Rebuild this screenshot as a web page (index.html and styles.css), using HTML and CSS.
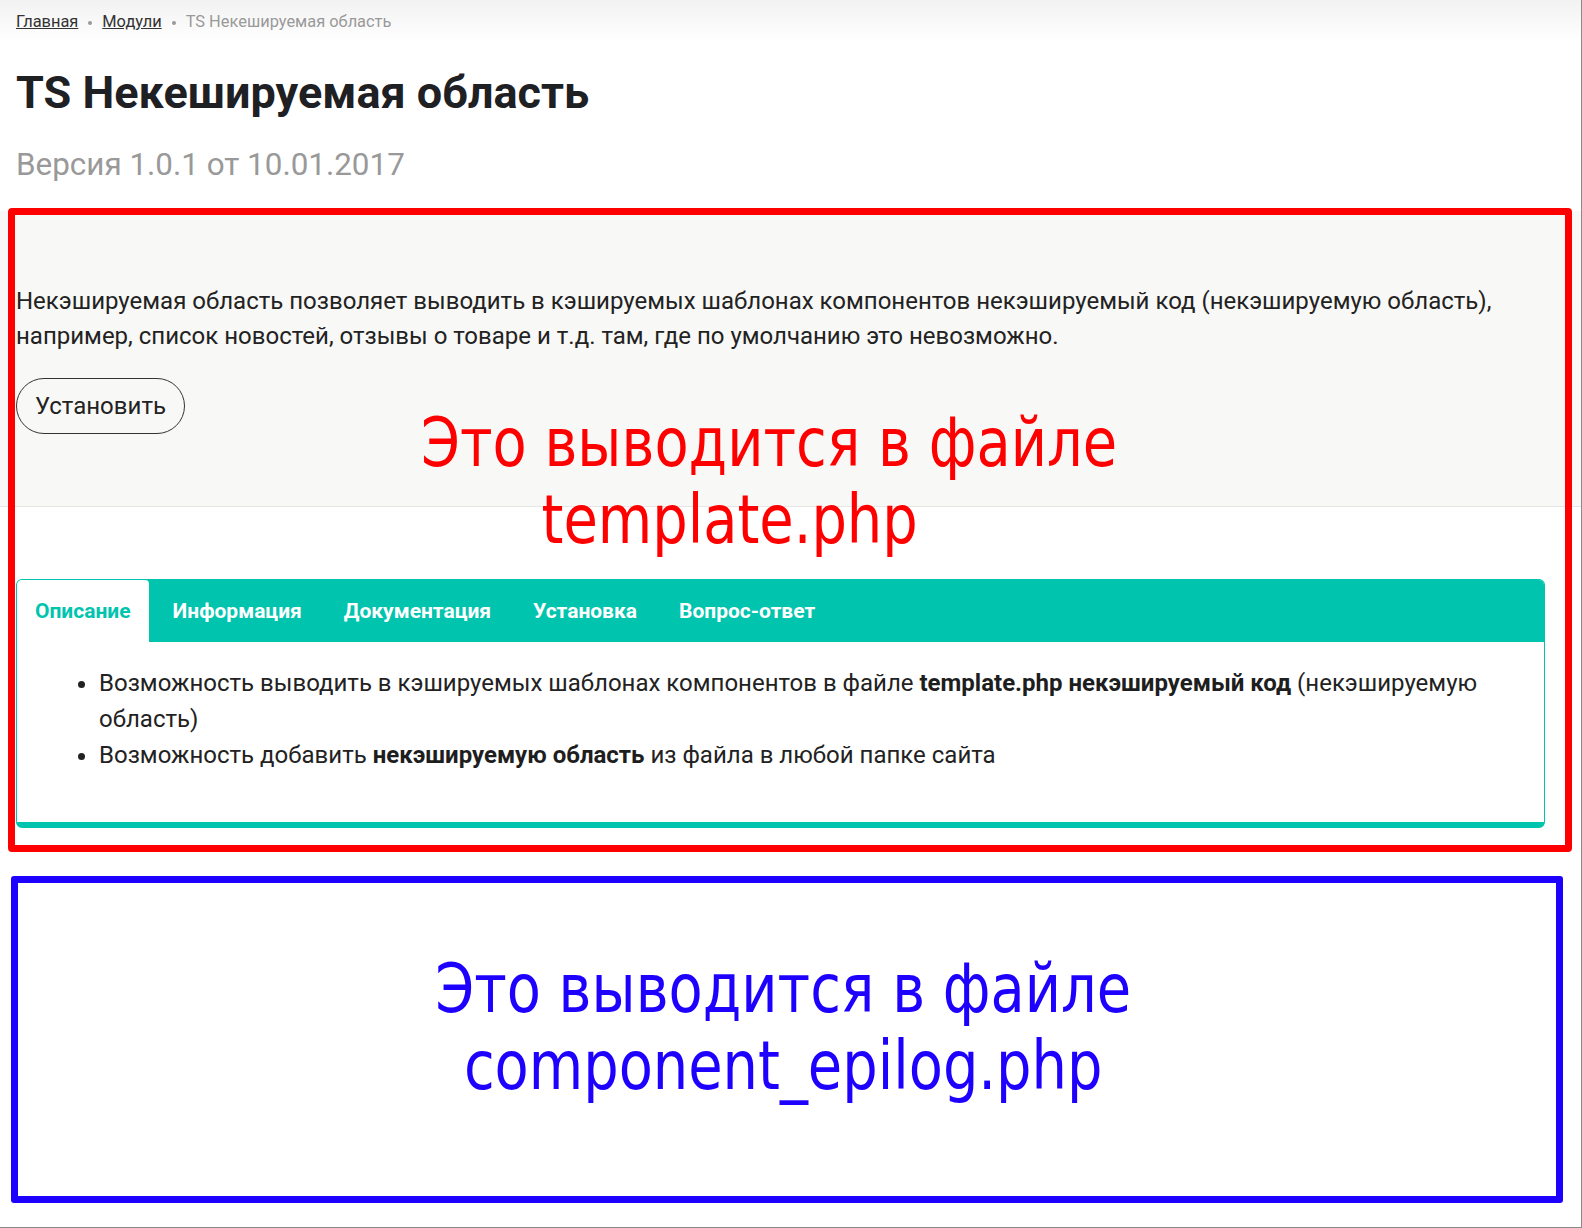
FILE: index.html
```html
<!DOCTYPE html>
<html lang="ru">
<head>
<meta charset="utf-8">
<title>TS Некешируемая область</title>
<link rel="stylesheet" href="styles.css">
</head>
<body>
<div class="page">
  <div class="topband">
    <nav class="crumbs">
      <a href="#" class="crumb-link">Главная</a>
      <span class="crumb-sep"></span>
      <a href="#" class="crumb-link">Модули</a>
      <span class="crumb-sep"></span>
      <span class="crumb-current">TS Некешируемая область</span>
    </nav>
  </div>
  <h1 class="title">TS Некешируемая область</h1>
  <div class="version">Версия 1.0.1 от 10.01.2017</div>

  <div class="cached">
    <section class="intro">
      <p class="intro-text">Некэшируемая область позволяет выводить в кэшируемых шаблонах компонентов некэшируемый код (некэшируемую область), например, список новостей, отзывы о товаре и т.д. там, где по умолчанию это невозможно.</p>
      <button class="install-btn">Установить</button>
    </section>
    <div class="tabs-wrap">
      <div class="tabs">
        <div class="tab-bar">
          <span class="tab tab-active">Описание</span>
          <span class="tab">Информация</span>
          <span class="tab">Документация</span>
          <span class="tab">Установка</span>
          <span class="tab">Вопрос-ответ</span>
        </div>
        <div class="tab-body">
          <ul class="features">
            <li>Возможность выводить в кэшируемых шаблонах компонентов в файле <b>template.php некэшируемый код</b> (некэшируемую область)</li>
            <li>Возможность добавить <b>некэшируемую область</b> из файла в любой папке сайта</li>
          </ul>
        </div>
      </div>
    </div>
    <div class="frame-red"></div>
    <div class="note note-red">
      <div class="note-line">Это выводится в файле</div>
      <div class="note-line note-line-2">template.php</div>
    </div>
  </div>

  <div class="epilog">
    <div class="note-blue">Это выводится в файле<br>component_epilog.php</div>
  </div>
</div>
</body>
</html>
```

FILE: styles.css
```css
html, body {
  margin: 0;
  padding: 0;
  background: #fff;
}
body {
  font-family: Roboto, "Noto Sans", sans-serif;
  color: #222;
}
.page {
  width: 1581px;
  height: 1227px;
  border-right: 1px solid #8a8a8a;
  border-bottom: 1px solid #8a8a8a;
  overflow: hidden;
  position: relative;
}
.topband {
  height: 42px;
  background: linear-gradient(#f2f2f2, #ffffff);
  padding: 0 16px;
}
.crumbs {
  display: flex;
  align-items: center;
  height: 42px;
  font-size: 16.4px;
  box-sizing: border-box;
}
.crumb-link {
  color: #333;
  text-decoration: underline;
}
.crumb-sep {
  width: 4px;
  height: 4px;
  border-radius: 50%;
  background: #999;
  margin: 4px 10px 0;
}
.crumb-current {
  color: #999;
}
.title {
  margin: 25px 0 0 16px;
  font-size: 45px;
  font-weight: 700;
  line-height: 52px;
  color: #1e2024;
}
.version {
  margin: 26px 0 0 16px;
  font-size: 31.4px;
  line-height: 40px;
  color: #999;
}
.cached {
  position: relative;
  margin-top: 26px;
}
.intro {
  background: #f8f8f6;
  border-bottom: 1px solid #e6e6e4;
  padding: 73px 16px 72px;
}
.intro-text {
  margin: 0;
  font-size: 24px;
  line-height: 35px;
  color: #222;
}
.install-btn {
  display: block;
  margin-top: 24px;
  height: 56px;
  padding: 0 18px;
  border: 1px solid #333;
  border-radius: 28px;
  background: transparent;
  font-family: Roboto, sans-serif;
  font-size: 24px;
  color: #222;
}
.tabs-wrap {
  padding: 72px 36px 24px 16px;
}
.tabs {
  border: 1px solid #00c4ad;
  border-bottom: 6px solid #00c4ad;
  border-radius: 6px;
  overflow: hidden;
}
.tab-bar {
  display: flex;
  background: #00c4ad;
  height: 62px;
}
.tab {
  display: flex;
  align-items: center;
  padding: 0 21px;
  font-size: 21px;
  font-weight: 700;
  color: #fff;
}
.tab-active {
  background: #fff;
  color: #00c4ad;
  padding: 0 18px;
  margin-right: 3px;
  border-top-right-radius: 4px;
}
.tab-body {
  padding: 23px 60px 49px;
  background: #fff;
}
.features {
  margin: 0;
  padding-left: 22px;
  font-size: 24px;
  line-height: 36px;
  color: #222;
}
.features b {
  font-weight: 700;
  color: #1e1e1e;
}
.frame-red {
  position: absolute;
  left: 8px;
  top: -3px;
  width: 1564px;
  height: 644px;
  box-sizing: border-box;
  border: 7px solid #ff0000;
  border-radius: 4px;
  pointer-events: none;
}
.note {
  position: absolute;
  font-family: "DejaVu Sans Condensed", "DejaVu Sans", sans-serif;
  font-stretch: condensed;
  font-size: 68px;
  line-height: 77px;
  white-space: nowrap;
  transform: scaleX(0.913);
  transform-origin: 0 0;
}
.note-red {
  left: 421px;
  top: 193px;
  color: #ff0000;
}
.note-line-2 {
  margin-left: 132px;
}
.epilog {
  margin: 24px 18px 0 11px;
  height: 327px;
  box-sizing: border-box;
  border: 7px solid #1e00ff;
  border-radius: 3px;
  display: flex;
  align-items: center;
  justify-content: center;
}
.note-blue {
  font-family: "DejaVu Sans Condensed", "DejaVu Sans", sans-serif;
  font-stretch: condensed;
  font-size: 68px;
  line-height: 77px;
  white-space: nowrap;
  text-align: center;
  color: #1e00ff;
  transform: scaleX(0.913);
  margin: 0 7px 26px 0;
}
```
